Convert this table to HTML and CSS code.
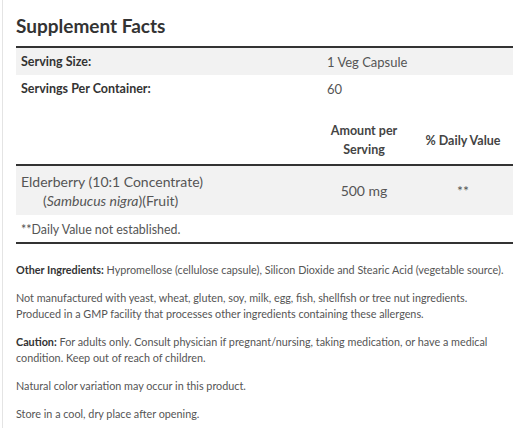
FILE: index.html
```html
<!DOCTYPE html>
<html>
<head>
<meta charset="utf-8">
<link rel="stylesheet" href="styles.css">
</head>
<body>
<div class="page">
  <h1 class="title">Supplement Facts</h1>
  <div class="facts">
    <div class="row row-shaded serving">
      <div class="label">Serving Size:</div>
      <div class="value">1 Veg Capsule</div>
    </div>
    <div class="row serving">
      <div class="label">Servings Per Container:</div>
      <div class="value">60</div>
    </div>
    <div class="row head">
      <div></div>
      <div class="hcell">Amount per<br>Serving</div>
      <div class="hcell dv">% Daily Value</div>
    </div>
    <div class="row row-shaded item">
      <div class="iname">Elderberry (10:1 Concentrate)<br><span class="indent">(<em>Sambucus nigra</em>)(Fruit)</span></div>
      <div class="num">500 mg</div>
      <div class="num">**</div>
    </div>
    <div class="row note">**Daily Value not established.</div>
  </div>
  <div class="info">
    <p><b>Other Ingredients:</b> Hypromellose (cellulose capsule), Silicon Dioxide and Stearic Acid (vegetable source).</p>
    <p>Not manufactured with yeast, wheat, gluten, soy, milk, egg, fish, shellfish or tree nut ingredients.<br>Produced in a GMP facility that processes other ingredients containing these allergens.</p>
    <p><b>Caution:</b> For adults only. Consult physician if pregnant/nursing, taking medication, or have a medical condition. Keep out of reach of children.</p>
    <p>Natural color variation may occur in this product.</p>
    <p>Store in a cool, dry place after opening.</p>
  </div>
</div>
</body>
</html>
```

FILE: styles.css
```css
html, body {
  margin: 0;
  padding: 0;
  background: #fff;
}
body {
  font-family: "Lato", "Open Sans", sans-serif;
  color: #555;
}
.page {
  margin-left: 2px;
  border-left: 1px solid #e4e4e4;
  padding: 0 15px 0 13px;
  min-height: 428px;
  box-sizing: border-box;
}
.title {
  margin: 0;
  padding-top: 16px;
  height: 46px;
  box-sizing: border-box;
  font-size: 19px;
  line-height: 20px;
  font-weight: 700;
  color: #333;
}
.facts {
  border-top: 2px solid #333;
  border-bottom: 2px solid #333;
}
.row {
  display: grid;
  grid-template-columns: 299px 98px 100px;
  align-items: center;
}
.row-shaded {
  background: #f2f2f2;
}
.serving {
  height: 27px;
}
.serving .label {
  padding-left: 5px;
  font-size: 12.5px;
  font-weight: 700;
  color: #333;
}
.serving .value {
  padding-left: 12px;
  color: #555;
  font-size: 13px;
}
.head {
  height: 64px;
  align-items: end;
  padding-bottom: 5px;
  box-sizing: border-box;
  border-bottom: 2px solid #333;
  font-size: 12.5px;
  font-weight: 700;
  color: #444;
  line-height: 19px;
}
.hcell {
  text-align: center;
}
.dv {
  margin-bottom: 9px;
}
.item {
  height: 49px;
  font-size: 14px;
  line-height: 19px;
  margin-bottom: 1px;
}
.iname {
  padding-left: 5px;
}
.indent {
  padding-left: 22px;
}
.num {
  text-align: center;
}
.note {
  display: block;
  height: 26px;
  line-height: 27px;
  padding-left: 5px;
  font-size: 12.4px;
}
.info {
  padding-top: 18px;
  font-size: 10.8px;
  line-height: 16px;
}
.info p {
  margin: 0 0 12px 0;
}
.info b {
  font-weight: 700;
  color: #333;
}
```
